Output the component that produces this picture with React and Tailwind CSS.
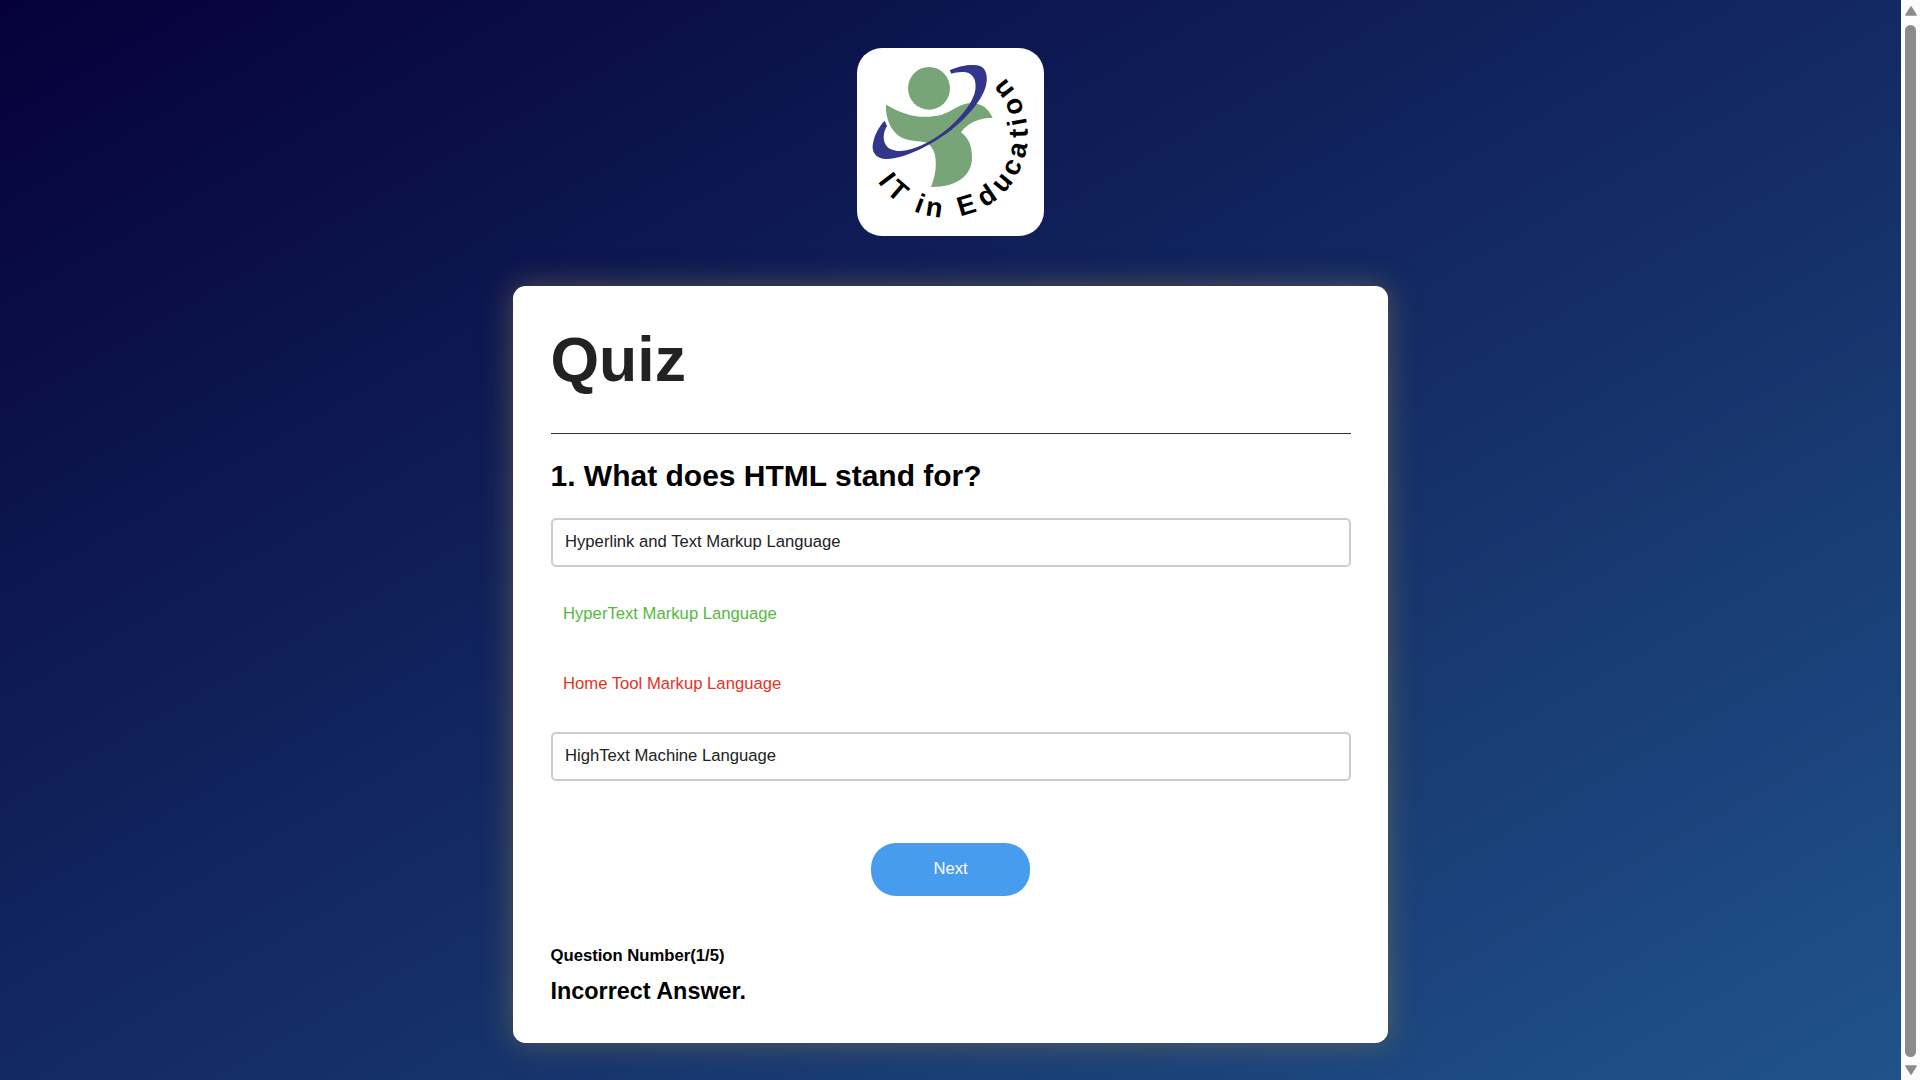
const options = [
  { text: 'Hyperlink and Text Markup Language', state: 'idle' },
  { text: 'HyperText Markup Language', state: 'correct' },
  { text: 'Home Tool Markup Language', state: 'wrong' },
  { text: 'HighText Machine Language', state: 'idle' },
];

const optionStyles = {
  idle: 'h-[49px] border-2 border-[#ccc] text-[#222]',
  correct: 'h-[45px] text-[#55b83f]',
  wrong: 'h-[45px] text-[#e8321e]',
};

function Logo() {
  return (
    <div className="mt-12 h-[188px] w-[187px] shrink-0 overflow-hidden rounded-[25px] bg-white">
      <svg viewBox="51 54 561 564" className="block h-full w-full">
        <g fill="#77a577">
          <ellipse cx="267" cy="175" rx="63" ry="64" />
          <path d="M138 224 C190 254 240 270 305 254 C342 242 358 220 394 219 C428 220 444 236 458 263 C418 263 382 279 363 307 C388 326 396 350 396 384 C396 436 350 472 273 471 C290 430 288 400 286 382 C284 362 275 350 262 338 C235 333 205 334 183 322 C152 303 136 265 138 224 Z" />
        </g>
        <path
          fill="#33358b"
          d="M329 121 C365 104 400 102 420 108 C440 116 444 142 438 166 C430 205 385 260 334 300 C270 348 195 385 140 387 C105 386 92 363 100 335 C105 312 118 288 134 272 L141 288 C130 306 128 326 136 342 C146 362 172 366 200 361 C240 352 280 331 321 298 C365 260 401 215 406 180 C410 150 400 132 378 127 C363 124 348 127 334 131 Z"
        />
        <path id="logo-arc" d="M102 438.5 A247 247 0 0 0 563 315 A247 247 0 0 0 439.5 101" fill="none" />
        <text
          fill="#000"
          fontFamily="Liberation Sans, Arial, sans-serif"
          fontWeight="700"
          fontSize="82"
          dx="20 16 15 13 14 17 17 23 19 13 15 20 12 17 18"
        >
          <textPath href="#logo-arc">IT in Education</textPath>
        </text>
      </svg>
    </div>
  );
}

function Scrollbar() {
  return (
    <div className="flex h-full w-[19px] shrink-0 flex-col items-center justify-between bg-[#fcfcfc] pt-[6px] pb-[5px]">
      <svg viewBox="0 0 12 10" className="h-[10px] w-3">
        <path d="M6 1 L11 9 H1 Z" fill="#8b8b8b" stroke="#8b8b8b" strokeLinejoin="round" strokeWidth="1.5" />
      </svg>
      <div className="mt-[9px] mb-[8px] w-[11px] flex-1 rounded-full bg-[#8b8b8b]" />
      <svg viewBox="0 0 12 10" className="h-[10px] w-3">
        <path d="M6 9 L11 1 H1 Z" fill="#8b8b8b" stroke="#8b8b8b" strokeLinejoin="round" strokeWidth="1.5" />
      </svg>
    </div>
  );
}

export default function App() {
  return (
    <div className="flex h-screen w-full overflow-hidden font-['Liberation_Sans',Arial,sans-serif]">
      <main className="flex h-full min-w-0 flex-1 flex-col items-center bg-[linear-gradient(to_bottom_right,#05003a,#132962_50%,#20538a)]">
        <Logo />
        <section className="mt-[50px] h-[757px] w-[875px] shrink-0 rounded-[12.5px] bg-white px-[37.5px] shadow-[0_0_30px_rgba(129,119,78,0.6)]">
          <h1 className="mt-[37px] h-[72px] text-[62.5px] leading-[72px] font-bold text-[#222]">Quiz</h1>
          <div className="mt-[38px] h-px bg-[#333]" />
          <h2 className="mt-[25px] text-[30px] leading-[34px] font-bold text-black">1. What does HTML stand for?</h2>
          <div className="mt-[25px] flex flex-col gap-[25px]">
            {options.map((option) => (
              <button
                key={option.text}
                className={`block w-full rounded-[5px] px-[12.5px] pb-px text-left text-[16.67px] leading-[20px] ${optionStyles[option.state]}`}
              >
                {option.text}
              </button>
            ))}
          </div>
          <button className="mx-auto mt-[62px] block h-[53px] w-[159px] rounded-[25px] bg-[#489cee] pb-[2px] text-[16.67px] text-white">
            Next
          </button>
          <p className="mt-[50px] text-[16.67px] leading-[20px] font-bold text-black">Question Number(1/5)</p>
          <p className="mt-[12px] text-[23.4px] leading-[27px] font-bold text-black">Incorrect Answer.</p>
        </section>
      </main>
      <Scrollbar />
    </div>
  );
}
